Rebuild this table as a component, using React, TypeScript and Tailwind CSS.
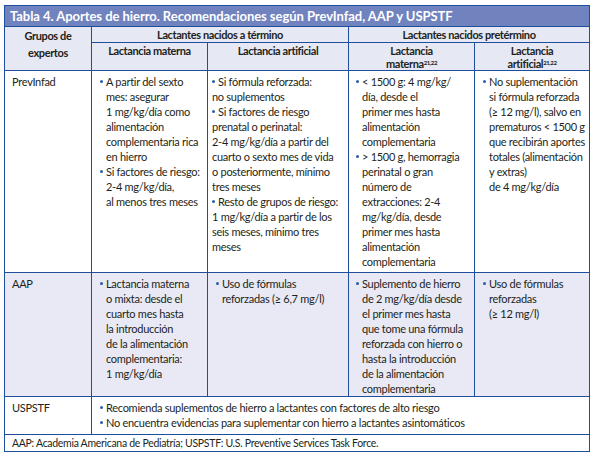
import React from 'react';

type Item = { lines: string[]; hang?: boolean };

function Dot() {
  return <span className="mr-[3px] inline-block h-[3px] w-[3px] -translate-y-[2px] rounded-full bg-[#2b5cad] align-middle" />;
}

function Bullets({ items }: { items: Item[] }) {
  return (
    <>
      {items.map((item, i) => (
        <div key={i}>
          {item.lines.map((line, j) => (
            <div key={j} className={j > 0 && item.hang !== false ? 'whitespace-nowrap pl-[6px]' : 'whitespace-nowrap'}>
              {j === 0 && <Dot />}
              {line}
            </div>
          ))}
        </div>
      ))}
    </>
  );
}

const prevMaterna: Item[] = [
  { lines: ['A partir del sexto', 'mes: asegurar', '1 mg/kg/día como', 'alimentación', 'complementaria rica', 'en hierro'] },
  { lines: ['Si factores de riesgo:', '2-4 mg/kg/día,', 'al menos tres meses'] },
];

const prevArtificial: Item[] = [
  { lines: ['Si fórmula reforzada:', 'no suplementos'], hang: false },
  { lines: ['Si factores de riesgo', 'prenatal o perinatal:', '2-4 mg/kg/día a partir del', 'cuarto o sexto mes de vida', 'o posteriormente, mínimo', 'tres meses'], hang: false },
  { lines: ['Resto de grupos de riesgo:', '1 mg/kg/día a partir de los', 'seis meses, mínimo tres', 'meses'], hang: false },
];

const prevPreMaterna: Item[] = [
  { lines: ['< 1500 g: 4 mg/kg/', 'día, desde el', 'primer mes hasta', 'alimentación', 'complementaria'] },
  { lines: ['> 1500 g, hemorragia', 'perinatal o gran', 'número de', 'extracciones: 2-4', 'mg/kg/día, desde', 'primer mes hasta', 'alimentación', 'complementaria'] },
];

const prevPreArtificial: Item[] = [
  { lines: ['No suplementación', 'si fórmula reforzada', '(≥ 12 mg/l), salvo en', 'prematuros < 1500 g', 'que recibirán aportes', 'totales (alimentación', 'y extras)', 'de 4 mg/kg/día'] },
];

const aapMaterna: Item[] = [
  { lines: ['Lactancia materna', 'o mixta: desde el', 'cuarto mes hasta', 'la introducción', 'de la alimentación', 'complementaria:', '1 mg/kg/día'] },
];

const aapArtificial: Item[] = [{ lines: ['Uso de fórmulas', 'reforzadas (≥ 6,7 mg/l)'] }];

const aapPreMaterna: Item[] = [
  { lines: ['Suplemento de hierro', 'de 2 mg/kg/día desde', 'el primer mes hasta', 'que tome una fórmula', 'reforzada con hierro o', 'hasta la introducción', 'de la alimentación', 'complementaria'] },
];

const aapPreArtificial: Item[] = [{ lines: ['Uso de fórmulas', 'reforzadas', '(≥ 12 mg/l)'] }];

const uspstf: Item[] = [
  { lines: ['Recomienda suplementos de hierro a lactantes con factores de alto riesgo'] },
  { lines: ['No encuentra evidencias para suplementar con hierro a lactantes asintomáticos'] },
];

export default function App() {
  return (
    <div className="min-h-screen bg-white pl-1 pt-[5px]">
      <div className="grid w-[586px] grid-cols-[86px_115px_140px_125px_114px] grid-rows-[20px_15px_27px_201px_123px_37px_16px] gap-px border border-[#1f4f9c] bg-[#1f4f9c] font-['Lato',sans-serif] text-[11px] leading-[15px] tracking-[-0.28px] text-[#231f20]">
        <div className="col-span-5 flex items-center bg-[#7083bf] px-[5px] text-[13px] font-bold tracking-[-0.05px] text-white">
          Tabla 4. Aportes de hierro. Recomendaciones según PrevInfad, AAP y USPSTF
        </div>

        <div className="row-span-2 bg-[#e6e8f4] text-center font-bold leading-[17px] tracking-[-0.4px]">
          Grupos de
          <br />
          expertos
        </div>
        <div className="col-span-2 bg-[#e6e8f4] text-center font-bold tracking-[-0.4px]">Lactantes nacidos a término</div>
        <div className="col-span-2 bg-[#e6e8f4] text-center font-bold tracking-[-0.4px]">Lactantes nacidos pretérmino</div>

        <div className="bg-[#e6e8f4] pt-px text-center font-bold leading-[13px] tracking-[-0.4px]">Lactancia materna</div>
        <div className="bg-[#e6e8f4] pt-px text-center font-bold leading-[13px] tracking-[-0.4px]">Lactancia artificial</div>
        <div className="bg-[#e6e8f4] pt-px text-center font-bold leading-[13px] tracking-[-0.4px]">
          Lactancia
          <br />
          materna<sup className="text-[6px]">21,22</sup>
        </div>
        <div className="bg-[#e6e8f4] pt-px text-center font-bold leading-[13px] tracking-[-0.4px]">
          Lactancia
          <br />
          artificial<sup className="text-[6px]">21,22</sup>
        </div>

        <div className="bg-white pl-[7px] pt-[3px]">PrevInfad</div>
        <div className="bg-white pl-2 pt-[3px]">
          <Bullets items={prevMaterna} />
        </div>
        <div className="bg-white pl-[4px] pt-[3px]">
          <Bullets items={prevArtificial} />
        </div>
        <div className="bg-white pl-[7px] pt-[3px]">
          <Bullets items={prevPreMaterna} />
        </div>
        <div className="bg-white pl-2 pt-[3px]">
          <Bullets items={prevPreArtificial} />
        </div>

        <div className="bg-[#e8e9f5] pl-[7px] pt-[3px]">AAP</div>
        <div className="bg-[#e8e9f5] pl-2 pt-[3px]">
          <Bullets items={aapMaterna} />
        </div>
        <div className="bg-[#e8e9f5] pl-2 pt-[3px]">
          <Bullets items={aapArtificial} />
        </div>
        <div className="bg-[#e8e9f5] pl-[7px] pt-[3px]">
          <Bullets items={aapPreMaterna} />
        </div>
        <div className="bg-[#e8e9f5] pl-2 pt-[3px]">
          <Bullets items={aapPreArtificial} />
        </div>

        <div className="bg-white pl-[7px] pt-[3px]">USPSTF</div>
        <div className="col-span-4 bg-white pl-2 pt-[3px]">
          <Bullets items={uspstf} />
        </div>

        <div className="col-span-5 flex items-center bg-white px-[7px] text-[10.5px] tracking-[-0.3px]">
          AAP: Academia Americana de Pediatría; USPSTF: U.S. Preventive Services Task Force.
        </div>
      </div>
    </div>
  );
}
